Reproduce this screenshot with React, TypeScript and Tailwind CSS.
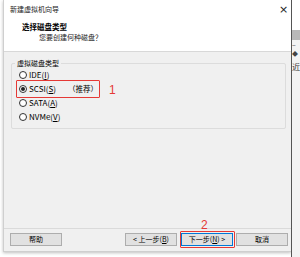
import React from 'react';

const font = { fontFamily: '"Microsoft YaHei", "Noto Sans CJK SC", "Noto Sans", sans-serif' };

const Radio: React.FC<{ label: React.ReactNode; checked?: boolean }> = ({ label, checked }) => (
  <div className="flex items-center h-[14px] gap-[2px]">
    <span className="w-[8px] h-[8px] rounded-full border border-[#333] bg-white flex items-center justify-center">
      {checked && <span className="w-[4px] h-[4px] rounded-full bg-[#222]" />}
    </span>
    <span className="text-[8px] leading-none text-black">{label}</span>
  </div>
);

const Btn: React.FC<{ children: React.ReactNode; primary?: boolean; className?: string }> = ({
  children,
  primary,
  className = '',
}) => (
  <div
    className={`h-[13px] w-[52px] flex items-center justify-center text-[7px] leading-none text-black bg-[#e1e1e1] border ${
      primary ? 'border-[#0078d7]' : 'border-[#adadad]'
    } ${className}`}
  >
    {children}
  </div>
);

export default function App() {
  return (
    <div className="w-[300px] h-[257px] bg-white flex overflow-hidden" style={font}>
      {/* dialog */}
      <div className="ml-[3px] w-[290px] h-[252px] flex flex-col bg-white border-l border-b border-[#cfcfcf] shadow-[0_1px_3px_rgba(0,0,0,0.25)]">
        <div className="h-[18px] flex items-center pl-[6px] pr-[4px]">
          <span className="flex-1 text-[7px] leading-none text-[#222]">新建虚拟机向导</span>
          <span
            className="w-[8px] text-[11px] leading-none text-[#222] text-center"
            style={{ fontFamily: '"DejaVu Sans", sans-serif' }}
          >
            ×
          </span>
        </div>
        <div className="h-[33px] flex flex-col pl-[18px] pt-[4px]">
          <span className="text-[7.5px] leading-[10px] font-bold text-black">选择磁盘类型</span>
          <span className="text-[7px] leading-[10px] text-[#222] pl-[17px]">您要创建何种磁盘？</span>
        </div>
        <div className="h-px bg-[#d8d8d8]" />
        <div className="flex-1 bg-[#f0f0f0] flex flex-col">
          <div className="relative mt-[11px] ml-[7px] mr-[5px] h-[66px] border border-[#dcdcdc] rounded-[2px] pl-[7px] pt-[4px]">
            <span className="absolute -top-[6px] left-[3px] px-[2px] bg-[#f0f0f0] text-[7px] leading-[10px] text-black">
              虚拟磁盘类型
            </span>
            <Radio label={<>IDE(<u>I</u>)</>} />
            <Radio
              checked
              label={
                <>
                  SCSI(<u>S</u>)<span className="ml-[12px] text-[7.5px]">（推荐）</span>
                </>
              }
            />
            <Radio label={<>SATA(<u>A</u>)</>} />
            <Radio label={<>NVMe(<u>V</u>)</>} />
            {/* annotation */}
            <div className="absolute left-[4px] top-[16px] w-[84px] h-[18px] border-[1.5px] border-[#e53935] rounded-[1px]" />
            <span className="absolute left-[97px] top-[20px] text-[12px] leading-none text-[#e53935]" style={{ fontFamily: '"Liberation Sans", sans-serif' }}>
              1
            </span>
          </div>
          <div className="flex-1" />
          <div className="h-px bg-[#dadada]" />
          <div className="h-[22px] flex items-start pt-[4px] pl-[6px] relative">
            <Btn>帮助</Btn>
            <div className="flex-1" />
            <Btn className="mr-[4px]">&lt; 上一步(<u>B</u>)</Btn>
            <div className="relative mr-[3px]">
              <Btn primary>下一步(<u>N</u>) &gt;</Btn>
              <div className="absolute -left-[1px] -top-[2px] w-[55px] h-[17px] border-[1.5px] border-[#e53935] rounded-[1px]" />
              <span className="absolute left-[20px] -top-[14px] text-[12px] leading-none text-[#e53935]" style={{ fontFamily: '"Liberation Sans", sans-serif' }}>
                2
              </span>
            </div>
            <Btn className="mr-[3px]">取消</Btn>
          </div>
        </div>
      </div>
      {/* window behind */}
      <div className="flex-1 h-full flex flex-col border-l border-[#555] bg-[#f3f3f3]">
        <div className="h-[30px] bg-white" />
        <div className="h-[10px] bg-[#b8b8b8]" />
        <div className="h-[8px] flex items-center text-[7px] leading-none text-[#333]">–</div>
        <div className="h-[12px] flex items-center text-[6px] leading-none text-[#444]">◆</div>
        <div className="h-[14px] flex items-center text-[8px] leading-none text-[#333]">近</div>
      </div>
    </div>
  );
}
